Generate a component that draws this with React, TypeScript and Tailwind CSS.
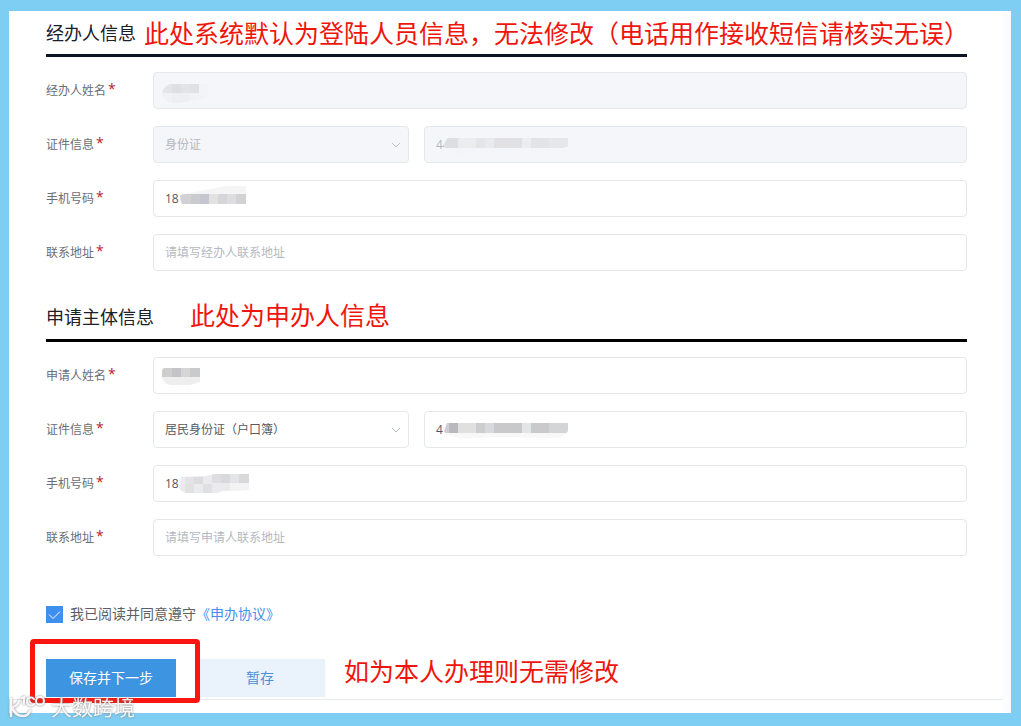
import { useState } from 'react';
import type { ReactNode } from 'react';
import { clsx } from 'clsx';

// x, y, width, height, fill
type Block = [number, number, number, number, string];

interface MaskShape {
  w: number;
  h: number;
  clip: string;
  blocks: Block[];
}

const MASKS: Record<string, MaskShape> = {
  agentName: {
    w: 46,
    h: 19,
    clip: 'M8 0H46V13L36 16L16 19Q2 19 0 11Q0 3 8 0Z',
    blocks: [
      [0, 0, 46, 19, '#f0f2f5'],
      [0, 0, 10, 9, '#e3e5e8'],
      [10, 0, 9, 9, '#dddfe3'],
      [19, 0, 9, 9, '#e2e3e7'],
      [28, 0, 9, 9, '#dfe1e5'],
      [37, 0, 9, 13, '#f2f4f7'],
      [10, 9, 18, 10, '#edeff2'],
    ],
  },
  agentId: {
    w: 124,
    h: 16,
    clip: 'M4 0H124V8Q123 10 114 10H50L16 16Q2 15 0 8Q1 2 4 0Z',
    blocks: [
      [0, 0, 124, 16, '#f3f5f8'],
      [0, 0, 14, 10, '#dcdee1'],
      [14, 0, 18, 10, '#eaecee'],
      [32, 0, 9, 10, '#e3e5e7'],
      [41, 0, 9, 10, '#e8eaed'],
      [50, 0, 28, 10, '#e1e1e4'],
      [78, 0, 9, 10, '#ebedf0'],
      [87, 0, 18, 10, '#e2e4e7'],
      [105, 0, 19, 10, '#e5e7e9'],
    ],
  },
  agentPhone: {
    w: 66,
    h: 18,
    clip: 'M0 9L30 3L46 0H66V18H2Q0 14 0 9Z',
    blocks: [
      [0, 0, 66, 18, '#f5f5f5'],
      [0, 8, 11, 10, '#d2d2d4'],
      [11, 8, 9, 10, '#cacacf'],
      [20, 8, 9, 10, '#c5c6d0'],
      [29, 8, 9, 10, '#e2e2e3'],
      [38, 8, 9, 10, '#d6d6d8'],
      [47, 8, 9, 10, '#dedddf'],
      [56, 8, 10, 10, '#d2d1d4'],
    ],
  },
  ownerName: {
    w: 40,
    h: 17,
    clip: 'M2 0H38V14L28 17H8Q1 15 0 9V2Z',
    blocks: [
      [0, 0, 40, 17, '#eeeeee'],
      [0, 0, 10, 9, '#cecece'],
      [10, 0, 9, 9, '#c4c4c6'],
      [19, 0, 9, 9, '#d5d5d5'],
      [28, 0, 10, 9, '#c9cacc'],
    ],
  },
  ownerId: {
    w: 124,
    h: 16,
    clip: 'M3 0H124V8Q120 14 112 15L50 14L22 16Q2 14 0 8Z',
    blocks: [
      [0, 0, 124, 16, '#f8f8f8'],
      [0, 0, 5, 10, '#cfcfcf'],
      [5, 0, 9, 10, '#b9b9bd'],
      [14, 0, 18, 10, '#dfe0df'],
      [32, 0, 9, 10, '#cdcdd0'],
      [41, 0, 9, 10, '#d8d9dc'],
      [50, 0, 28, 10, '#c9c9cb'],
      [78, 0, 9, 10, '#e3e4e6'],
      [87, 0, 18, 10, '#cacacc'],
      [105, 0, 19, 10, '#d3d5d7'],
    ],
  },
  ownerPhone: {
    w: 70,
    h: 19,
    clip: 'M2 3L26 2L36 0H70V16L44 17L38 19H8Q2 18 0 14Z',
    blocks: [
      [0, 0, 70, 19, '#ebebed'],
      [6, 3, 9, 7, '#e4e4e6'],
      [15, 3, 9, 7, '#dcdcdf'],
      [33, 0, 9, 9, '#dedee1'],
      [42, 0, 9, 9, '#d8d9dd'],
      [51, 0, 9, 9, '#e4e3e6'],
      [60, 0, 10, 9, '#d9d9dc'],
      [6, 10, 9, 9, '#e1e1e2'],
      [24, 10, 9, 9, '#dfe0e1'],
      [51, 9, 19, 10, '#f3f3f4'],
    ],
  },
};

function Mask({ name, className }: { name: string; className: string }) {
  const { w, h, clip, blocks } = MASKS[name];
  return (
    <svg aria-hidden="true" width={w} height={h} viewBox={`0 0 ${w} ${h}`} className={clsx('pointer-events-none absolute', className)}>
      <clipPath id={`mask-${name}`}>
        <path d={clip} />
      </clipPath>
      <g clipPath={`url(#mask-${name})`}>
        {blocks.map(([x, y, bw, bh, fill], i) => (
          <rect key={i} x={x} y={y} width={bw} height={bh} fill={fill} />
        ))}
      </g>
    </svg>
  );
}

const CONTROL =
  'h-[37px] w-full rounded border border-[#e4e7eb] px-[11px] text-xs text-[#555a61] outline-none placeholder:text-[#b4b9c2] placeholder:opacity-100 disabled:bg-[#f5f6fa] disabled:text-[#b4b7bd] disabled:opacity-100';

interface TextFieldProps {
  id: string;
  value?: string;
  placeholder?: string;
  disabled?: boolean;
  label?: string;
  children?: ReactNode;
}

function TextField({ id, value = '', placeholder, disabled, label, children }: TextFieldProps) {
  return (
    <div className="relative flex-1">
      <input id={id} type="text" defaultValue={value} placeholder={placeholder} disabled={disabled} aria-label={label} className={clsx(CONTROL, !disabled && 'bg-white')} />
      {children}
    </div>
  );
}

function SelectField({ id, option, disabled }: { id: string; option: string; disabled?: boolean }) {
  return (
    <div className="relative w-64 shrink-0">
      <select id={id} disabled={disabled} className={clsx(CONTROL, 'appearance-none', !disabled && 'bg-white')}>
        <option>{option}</option>
      </select>
      <svg aria-hidden="true" viewBox="0 0 10 6" className="pointer-events-none absolute top-4 right-2 h-[6px] w-[10px]" fill="none" stroke="#b9bdc6">
        <path d="M1 1L5 5L9 1" />
      </svg>
    </div>
  );
}

function Row({ id, label, children }: { id: string; label: string; children: ReactNode }) {
  return (
    <div className="flex items-center">
      <label htmlFor={id} className="flex w-[107px] shrink-0 items-start text-xs text-[#6b6e73]">
        {label}
        <span className="ml-0.5 text-sm leading-3 text-[#b8242c]">*</span>
      </label>
      <div className="flex flex-1 gap-[15px]">{children}</div>
    </div>
  );
}

export default function App() {
  const [agreed, setAgreed] = useState(true);

  return (
    <div className="min-h-screen bg-[#7ecdf2] pt-[11px] pr-[10px] pb-[13px] pl-[9px] font-['Open_Sans','Noto_Sans_CJK_SC',sans-serif]">
      <main className="relative border-r-8 border-[#fafcfe] bg-white">
        <form className="pr-9 pl-[37px]" onSubmit={(e) => e.preventDefault()}>
          {/* Agent */}
          <section>
            <div className="flex h-[46px] items-center gap-2 border-b-3 border-[#0c1422] whitespace-nowrap">
              <h2 className="text-lg leading-6 text-[#1b2029]">经办人信息</h2>
              <p className="text-[25px] leading-7 text-[#ee160c]">此处系统默认为登陆人员信息，无法修改（电话用作接收短信请核实无误）</p>
            </div>
            <div className="flex flex-col gap-[17px] pt-[15px]">
              <Row id="agent-name" label="经办人姓名">
                <TextField id="agent-name" disabled>
                  <Mask name="agentName" className="top-3 left-[9px]" />
                </TextField>
              </Row>
              <Row id="agent-id-type" label="证件信息">
                <SelectField id="agent-id-type" option="身份证" disabled />
                <TextField id="agent-id" value="44" label="证件号码" disabled>
                  <Mask name="agentId" className="top-3 left-5" />
                </TextField>
              </Row>
              <Row id="agent-phone" label="手机号码">
                <TextField id="agent-phone" value="18">
                  <Mask name="agentPhone" className="top-[6px] left-[27px]" />
                </TextField>
              </Row>
              <Row id="agent-address" label="联系地址">
                <TextField id="agent-address" placeholder="请填写经办人联系地址" />
              </Row>
            </div>
          </section>

          {/* Applicant */}
          <section>
            <div className="flex h-[71px] items-end gap-9 border-b-3 border-black pb-[10px] whitespace-nowrap">
              <h2 className="text-lg leading-6 text-[#1b2029]">申请主体信息</h2>
              <p className="text-[25px] leading-7 text-[#ee160c]">此处为申办人信息</p>
            </div>
            <div className="flex flex-col gap-[17px] pt-[15px]">
              <Row id="owner-name" label="申请人姓名">
                <TextField id="owner-name">
                  <Mask name="ownerName" className="top-[11px] left-[9px]" />
                </TextField>
              </Row>
              <Row id="owner-id-type" label="证件信息">
                <SelectField id="owner-id-type" option="居民身份证（户口簿）" />
                <TextField id="owner-id" value="4" label="证件号码">
                  <Mask name="ownerId" className="top-3 left-5" />
                </TextField>
              </Row>
              <Row id="owner-phone" label="手机号码">
                <TextField id="owner-phone" value="18">
                  <Mask name="ownerPhone" className="top-[9px] left-[26px]" />
                </TextField>
              </Row>
              <Row id="owner-address" label="联系地址">
                <TextField id="owner-address" placeholder="请填写申请人联系地址" />
              </Row>
            </div>
          </section>

          <div className="mt-[49px] flex h-[18px] items-center text-sm">
            <label className="flex items-center gap-[7px] text-[#5c6066]">
              <span className="relative size-[17px]">
                <input type="checkbox" checked={agreed} onChange={(e) => setAgreed(e.target.checked)} className="block size-[17px] appearance-none border border-[#3d8ff0] checked:bg-[#3d8ff0]" />
                {agreed && (
                  <svg aria-hidden="true" viewBox="0 0 17 17" className="pointer-events-none absolute inset-0" fill="none" stroke="#fff">
                    <path d="M3 8.5L7 12.5L14 5.5" />
                  </svg>
                )}
              </span>
              我已阅读并同意遵守
            </label>
            <a href="#agreement" className="text-[#4590ee]">《申办协议》</a>
          </div>

          <div className="mt-9 flex gap-[19px] whitespace-nowrap">
            <div className="relative">
              <button type="submit" className="h-[38px] w-[130px] bg-[#3d95e1] text-sm text-white">保存并下一步</button>
              <div className="pointer-events-none absolute -top-5 -right-6 -bottom-[6px] -left-4 z-10 rounded border-5 border-[#f91610]" />
            </div>
            <button type="button" className="h-[38px] w-[130px] bg-[#eaf3fb] text-sm text-[#4a90d6]">暂存</button>
            <p className="text-[25px] leading-6 text-[#ee160c]">如为本人办理则无需修改</p>
          </div>
        </form>
        <div className="mt-0.5 h-[14px] border-t border-[#e8e9eb]" />

        {/* Watermark */}
        <div className="pointer-events-none absolute -bottom-2 left-0 z-20 flex items-center gap-1 text-white/90 drop-shadow-[0_0_1px_#777]">
          <svg aria-hidden="true" viewBox="0 0 38 26" width="38" height="26" fill="none" stroke="currentColor" strokeWidth="2.5" strokeLinecap="round">
            <path d="M2 5V22M10 7Q9 12 3 13Q6 22 14 22Q19 22 21 17" />
            <path d="M13 4L15 3V10M25 5A4 4 0 1 0 25 10" strokeWidth="2" />
            <circle cx="31" cy="7" r="4" strokeWidth="2" />
          </svg>
          <span className="text-[21px] leading-7">大数跨境</span>
        </div>
      </main>
    </div>
  );
}
